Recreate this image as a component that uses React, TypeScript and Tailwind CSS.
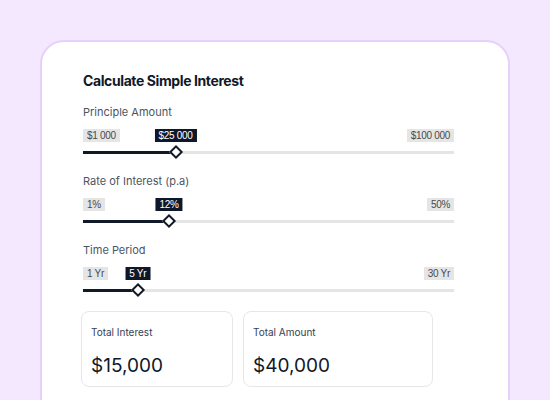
import { useState } from 'react';

type SliderProps = {
  label: string;
  min: number;
  max: number;
  value: number;
  format: (v: number) => string;
  onChange: (v: number) => void;
};

const THUMB = 10;

function Slider({ label, min, max, value, format }: SliderProps) {
  const pct = (value - min) / (max - min);
  const left = `calc(${THUMB / 2}px + ${pct} * (100% - ${THUMB}px))`;
  const tag = "px-[4px] font-['Liberation_Sans',Arial,sans-serif] text-[10px] leading-[13px] tracking-[-0.3px]";

  return (
    <div className="w-[371px]">
      <p className="text-[11px] leading-4 text-gray-600">{label}</p>
      <div className="relative mt-[9px] flex h-[13px] justify-between">
        <span className={`bg-[#e5e5e5] text-[#4a4a4a] ${tag}`}>{format(min)}</span>
        <span className={`bg-[#e5e5e5] text-[#4a4a4a] ${tag}`}>{format(max)}</span>
        <span className={`absolute top-0 -translate-x-1/2 bg-[#0f172a] text-white ${tag}`} style={{ left }}>
          {format(value)}
        </span>
      </div>
      <div className="relative mt-[3px] h-[14px]">
        <div className="absolute top-[6px] h-[3px] w-full bg-[#e5e5e5]" />
        <div className="absolute top-[6px] h-[3px] bg-[#111827]" style={{ width: left }} />
        <div
          className="absolute top-[2px] h-[10px] w-[10px] -translate-x-1/2 rotate-45 border-2 border-[#111827] bg-white"
          style={{ left }}
        />
      </div>
    </div>
  );
}

const money = (v: number) => '$' + v.toLocaleString('fr-FR').replace(/\s/g, ' ');

export default function App() {
  const [principal, setPrincipal] = useState(25000);
  const [rate, setRate] = useState(12);
  const [years, setYears] = useState(5);

  const interest = (principal * rate * years) / 100;
  const total = principal + interest;

  return (
    <div
      className="flex h-[400px] w-[550px] justify-center overflow-hidden bg-[#f3e8fe] pt-[40px]"
      style={{ fontFamily: 'Inter, "Noto Sans", sans-serif' }}
    >
      <div className="h-[420px] w-[470px] rounded-[24px] border-2 border-[#e6d1fa] bg-white pl-[41px] pt-[29px]">
        <h1 className="text-[14px] font-bold leading-5 tracking-[-0.4px] text-[#111827]">
          Calculate Simple Interest
        </h1>

        <div className="mt-[13px] flex flex-col gap-[14px]">
          <Slider label="Principle Amount" min={1000} max={100000} value={principal} format={money} onChange={setPrincipal} />
          <Slider label="Rate of Interest (p.a)" min={1} max={50} value={rate} format={(v) => `${v}%`} onChange={setRate} />
          <Slider label="Time Period" min={1} max={30} value={years} format={(v) => `${v} Yr`} onChange={setYears} />
        </div>

        <div className="ml-[-2px] mt-[14px] flex gap-[10px]">
          <div className="h-[76px] w-[152px] rounded-lg border border-gray-200 px-[9px] pt-[13px]">
            <p className="text-[10px] leading-[14px] text-gray-700">Total Interest</p>
            <p className="mt-[15px] text-[19px] leading-6 text-gray-900">${interest.toLocaleString('en-US')}</p>
          </div>
          <div className="h-[76px] w-[190px] rounded-lg border border-gray-200 px-[9px] pt-[13px]">
            <p className="text-[10px] leading-[14px] text-gray-700">Total Amount</p>
            <p className="mt-[15px] text-[19px] leading-6 text-gray-900">${total.toLocaleString('en-US')}</p>
          </div>
        </div>
      </div>
    </div>
  );
}
